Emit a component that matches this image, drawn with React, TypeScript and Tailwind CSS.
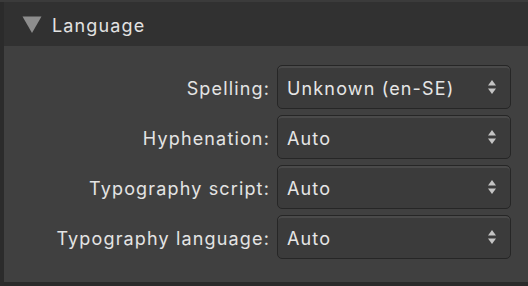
import React from "react";

const rows = [
  { label: "Spelling:", value: "Unknown (en-SE)" },
  { label: "Hyphenation:", value: "Auto" },
  { label: "Typography script:", value: "Auto" },
  { label: "Typography language:", value: "Auto" },
];

function Arrows() {
  return (
    <svg width="10" height="20" viewBox="0 0 10 20" className="shrink-0">
      <polygon points="5,3 9,8.5 1,8.5" fill="#c4c4c4" />
      <polygon points="5,17 9,11.5 1,11.5" fill="#c4c4c4" />
    </svg>
  );
}

export default function App() {
  return (
    <div
      className="w-[528px] h-[286px] flex flex-col bg-[#2a2a2a] overflow-hidden"
      style={{ fontFamily: "Inter, 'Noto Sans', sans-serif" }}
    >
      <div className="h-[2px] bg-[#3b3b3b] shrink-0" />
      <div className="flex flex-1 min-h-0">
        <div className="w-[4px] bg-[#2b2b2b] shrink-0" />
        <div className="flex-1 flex flex-col min-w-0">
          <div className="h-[44px] bg-[#313131] flex items-center pl-[18px] shrink-0">
            <svg width="20" height="18" viewBox="0 0 20 18" className="mt-[1px]">
              <polygon points="0.5,0.5 19.5,0.5 10,17" fill="#8d8d8d" />
            </svg>
            <span className="ml-[10px] mt-[2px] text-[18px] text-[#e2e2e2] tracking-[1.15px]">Language</span>
          </div>
          <div className="flex-1 bg-[#404040] pt-[19px] flex flex-col gap-[6px]">
            {rows.map((r) => (
              <div key={r.label} className="flex items-center h-[44px]">
                <div className="w-[266px] text-right text-[18px] text-[#e4e4e4] tracking-[1.15px] mt-[2px]">{r.label}</div>
                <div className="ml-[7px] w-[234px] h-[44px] rounded-[5px] border-[1.5px] border-[#262626] bg-[#3b3b3b] shadow-[inset_0_2px_0_#4a4a4a] flex items-center pl-[9px] pr-[13px]">
                  <span className="flex-1 text-[18px] text-[#e6e6e6] tracking-[1.15px] mt-[2px]">{r.value}</span>
                  <Arrows />
                </div>
              </div>
            ))}
          </div>
          <div className="h-[4px] bg-[#2a2a2a] shrink-0" />
        </div>
      </div>
    </div>
  );
}
